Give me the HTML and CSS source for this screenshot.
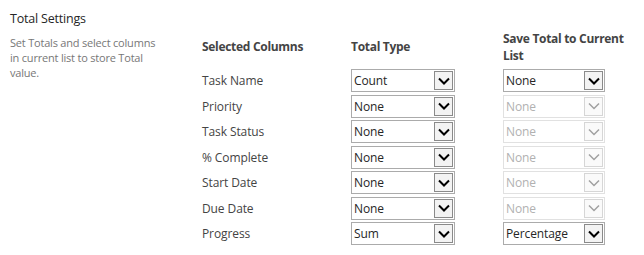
FILE: index.html
```html
<!DOCTYPE html>
<html>
<head>
<meta charset="utf-8">
<link rel="stylesheet" href="styles.css">
</head>
<body>
<div class="page">
  <div class="section">
    <div class="title">Total Settings</div>
    <div class="desc">Set Totals and select columns<br>in current list to store Total<br>value.</div>
  </div>
  <div class="grid">
    <div class="head h1">Selected Columns</div>
    <div class="head h1">Total Type</div>
    <div class="head h2">Save Total to Current List</div>

    <div class="label">Task Name</div>
    <div class="sel"><span class="val">Count</span><span class="btn"><svg viewBox="0 0 12 8" width="12" height="8"><path d="M1 1.5 L6 6.5 L11 1.5" fill="none" stroke="#000" stroke-width="2"/></svg></span></div>
    <div class="sel wide"><span class="val">None</span><span class="btn"><svg viewBox="0 0 12 8" width="12" height="8"><path d="M1 1.5 L6 6.5 L11 1.5" fill="none" stroke="#000" stroke-width="2"/></svg></span></div>

    <div class="label">Priority</div>
    <div class="sel"><span class="val">None</span><span class="btn"><svg viewBox="0 0 12 8" width="12" height="8"><path d="M1 1.5 L6 6.5 L11 1.5" fill="none" stroke="#000" stroke-width="2"/></svg></span></div>
    <div class="sel wide dis"><span class="val">None</span><span class="btn"><svg viewBox="0 0 12 8" width="12" height="8"><path d="M1 1.5 L6 6.5 L11 1.5" fill="none" stroke="#a0a0a0" stroke-width="1.5"/></svg></span></div>

    <div class="label">Task Status</div>
    <div class="sel"><span class="val">None</span><span class="btn"><svg viewBox="0 0 12 8" width="12" height="8"><path d="M1 1.5 L6 6.5 L11 1.5" fill="none" stroke="#000" stroke-width="2"/></svg></span></div>
    <div class="sel wide dis"><span class="val">None</span><span class="btn"><svg viewBox="0 0 12 8" width="12" height="8"><path d="M1 1.5 L6 6.5 L11 1.5" fill="none" stroke="#a0a0a0" stroke-width="1.5"/></svg></span></div>

    <div class="label">% Complete</div>
    <div class="sel"><span class="val">None</span><span class="btn"><svg viewBox="0 0 12 8" width="12" height="8"><path d="M1 1.5 L6 6.5 L11 1.5" fill="none" stroke="#000" stroke-width="2"/></svg></span></div>
    <div class="sel wide dis"><span class="val">None</span><span class="btn"><svg viewBox="0 0 12 8" width="12" height="8"><path d="M1 1.5 L6 6.5 L11 1.5" fill="none" stroke="#a0a0a0" stroke-width="1.5"/></svg></span></div>

    <div class="label">Start Date</div>
    <div class="sel"><span class="val">None</span><span class="btn"><svg viewBox="0 0 12 8" width="12" height="8"><path d="M1 1.5 L6 6.5 L11 1.5" fill="none" stroke="#000" stroke-width="2"/></svg></span></div>
    <div class="sel wide dis"><span class="val">None</span><span class="btn"><svg viewBox="0 0 12 8" width="12" height="8"><path d="M1 1.5 L6 6.5 L11 1.5" fill="none" stroke="#a0a0a0" stroke-width="1.5"/></svg></span></div>

    <div class="label">Due Date</div>
    <div class="sel"><span class="val">None</span><span class="btn"><svg viewBox="0 0 12 8" width="12" height="8"><path d="M1 1.5 L6 6.5 L11 1.5" fill="none" stroke="#000" stroke-width="2"/></svg></span></div>
    <div class="sel wide dis"><span class="val">None</span><span class="btn"><svg viewBox="0 0 12 8" width="12" height="8"><path d="M1 1.5 L6 6.5 L11 1.5" fill="none" stroke="#a0a0a0" stroke-width="1.5"/></svg></span></div>

    <div class="label">Progress</div>
    <div class="sel"><span class="val">Sum</span><span class="btn"><svg viewBox="0 0 12 8" width="12" height="8"><path d="M1 1.5 L6 6.5 L11 1.5" fill="none" stroke="#000" stroke-width="2"/></svg></span></div>
    <div class="sel wide"><span class="val">Percentage</span><span class="btn"><svg viewBox="0 0 12 8" width="12" height="8"><path d="M1 1.5 L6 6.5 L11 1.5" fill="none" stroke="#000" stroke-width="2"/></svg></span></div>
  </div>
</div>
</body>
</html>
```
FILE: styles.css
```css
html, body {
  margin: 0;
  padding: 0;
  background: #fff;
}
body {
  font-family: "Open Sans", "Noto Sans", sans-serif;
  color: #444;
}
.page {
  display: grid;
  grid-template-columns: 202px 1fr;
}
.section {
  padding: 10px 0 0 10px;
}
.title {
  font-size: 12.5px;
  line-height: 18px;
  color: #262626;
  letter-spacing: -0.2px;
}
.desc {
  margin-top: 7px;
  width: 180px;
  font-size: 11px;
  line-height: 15px;
  color: #777;
  letter-spacing: -0.2px;
}
.grid {
  display: grid;
  grid-template-columns: 149px 152px 140px;
  grid-auto-rows: 25.5px;
  grid-template-rows: 38px;
  padding-top: 30px;
  align-items: center;
}
.head {
  font-weight: bold;
  font-size: 12px;
  line-height: 17px;
  color: #444;
  letter-spacing: -0.3px;
  align-self: start;
}
.h1 {
  padding-top: 8px;
}
.h2 {
  width: 136px;
}
.label {
  font-size: 12px;
  color: #444;
  letter-spacing: -0.1px;
}
.sel {
  position: relative;
  box-sizing: border-box;
  width: 104px;
  height: 23px;
  border: 1px solid #ababab;
  background: #fff;
}
.sel.wide {
  width: 102px;
}
.val {
  display: block;
  padding-left: 2px;
  font-size: 12px;
  line-height: 21px;
  color: #262626;
  letter-spacing: -0.1px;
}
.btn {
  position: absolute;
  top: 1px;
  right: 1px;
  bottom: 1px;
  width: 19px;
  box-sizing: border-box;
  border: 1px solid #8a8a8a;
  background: #f3f3f3;
  display: flex;
  align-items: center;
  justify-content: center;
}
.sel.dis {
  border-color: #e1e1e1;
}
.sel.dis .val {
  color: #b1b1b1;
}
.sel.dis .btn {
  border-color: #d6d6d6;
  background: #fafafa;
}
```
